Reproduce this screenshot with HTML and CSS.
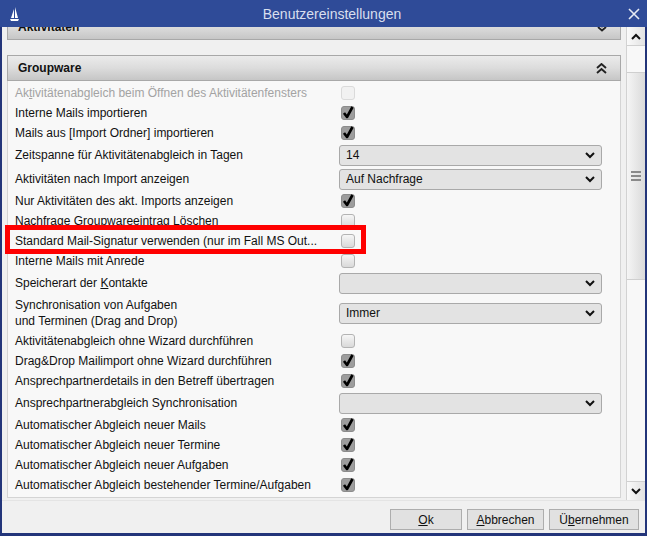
FILE: index.html
```html
<!DOCTYPE html>
<html lang="de">
<head>
    <meta charset="UTF-8">
    <title>Benutzereinstellungen</title>
    <link rel="stylesheet" href="styles.css">
</head>
<body>
<div class="window">
    <div class="titlebar">
        <svg class="app-icon" width="9" height="15" viewBox="0 0 9 15">
            <path d="M5 0 L8 11 L5 11 Z M4 2 L1 11 L4 11 Z" fill="#fff"/>
            <path d="M0 12 L9 12 L8 14 L1 14 Z" fill="#fff"/>
        </svg>
        <span class="title">Benutzereinstellungen</span>
        <svg class="close" width="12" height="12" viewBox="0 0 12 12">
            <path d="M1 1 L11 11 M11 1 L1 11" stroke="#e6eaf4" stroke-width="1.6"/>
        </svg>
    </div>

    <div class="client">
        <div class="main">
            <div class="view">
                <div class="panel-head first">
                    <span>Aktivitäten</span>
                    <svg width="10" height="10" viewBox="0 0 10 10"><path d="M1 1 L5 4.5 L9 1 M1 5 L5 8.5 L9 5" stroke="#222" stroke-width="1.8" fill="none"/></svg>
                </div>

                <div class="panel-head">
                    <span>Groupware</span>
                    <svg width="11" height="11" viewBox="0 0 11 11"><path d="M1 5 L5.5 1 L10 5 M1 10 L5.5 6 L10 10" stroke="#222" stroke-width="1.9" fill="none"/></svg>
                </div>
                <div class="panel-body">
                    <div class="row">
                        <div class="lbl disabled">Ak<u>t</u>ivitätenabgleich beim Öffnen des Aktivitätenfensters</div>
                        <div class="ctl"><span class="cb dis"></span></div>
                    </div>
                    <div class="row">
                        <div class="lbl">Interne Mails importieren</div>
                        <div class="ctl"><span class="cb on"><svg viewBox="0 0 14 14"><path d="M3 7.5 L6 11.5 L11.5 1.5"/></svg></span></div>
                    </div>
                    <div class="row">
                        <div class="lbl">Mails aus [Import Ordner] importieren</div>
                        <div class="ctl"><span class="cb on"><svg viewBox="0 0 14 14"><path d="M3 7.5 L6 11.5 L11.5 1.5"/></svg></span></div>
                    </div>
                    <div class="row sel">
                        <div class="lbl">Zeitspanne für Aktivitätenabgleich in Tagen</div>
                        <div class="ctl"><div class="combo"><span>14</span><svg viewBox="0 0 10 7"><path d="M1 1 L5 5 L9 1"/></svg></div></div>
                    </div>
                    <div class="row sel">
                        <div class="lbl">Aktivitäten nach Import anzeigen</div>
                        <div class="ctl"><div class="combo"><span>Auf Nachfrage</span><svg viewBox="0 0 10 7"><path d="M1 1 L5 5 L9 1"/></svg></div></div>
                    </div>
                    <div class="row">
                        <div class="lbl">Nur Aktivitäten des akt. Imports anzeigen</div>
                        <div class="ctl"><span class="cb on"><svg viewBox="0 0 14 14"><path d="M3 7.5 L6 11.5 L11.5 1.5"/></svg></span></div>
                    </div>
                    <div class="row">
                        <div class="lbl">Nachfrage Groupwareeintrag Löschen</div>
                        <div class="ctl"><span class="cb"></span></div>
                    </div>
                    <div class="row">
                        <div class="lbl">Standard Mail-Signatur verwenden (nur im Fall MS Out...</div>
                        <div class="ctl"><span class="cb"></span></div>
                    </div>
                    <div class="row">
                        <div class="lbl">Interne Mails mit Anrede</div>
                        <div class="ctl"><span class="cb"></span></div>
                    </div>
                    <div class="row sel">
                        <div class="lbl">Speicherart der <u>K</u>ontakte</div>
                        <div class="ctl"><div class="combo"><span></span><svg viewBox="0 0 10 7"><path d="M1 1 L5 5 L9 1"/></svg></div></div>
                    </div>
                    <div class="row tall">
                        <div class="lbl">Synchronisation von Aufgaben<br>und Terminen (Drag and Drop)</div>
                        <div class="ctl"><div class="combo"><span>Immer</span><svg viewBox="0 0 10 7"><path d="M1 1 L5 5 L9 1"/></svg></div></div>
                    </div>
                    <div class="row">
                        <div class="lbl">Aktivitätenabgleich ohne Wizard durchführen</div>
                        <div class="ctl"><span class="cb"></span></div>
                    </div>
                    <div class="row">
                        <div class="lbl">Drag&amp;Drop Mailimport ohne Wizard durchführen</div>
                        <div class="ctl"><span class="cb on"><svg viewBox="0 0 14 14"><path d="M3 7.5 L6 11.5 L11.5 1.5"/></svg></span></div>
                    </div>
                    <div class="row">
                        <div class="lbl">Ansprechpartnerdetails in den Betreff übertragen</div>
                        <div class="ctl"><span class="cb on"><svg viewBox="0 0 14 14"><path d="M3 7.5 L6 11.5 L11.5 1.5"/></svg></span></div>
                    </div>
                    <div class="row sel">
                        <div class="lbl">Ansprechpartnerabgleich Synchronisation</div>
                        <div class="ctl"><div class="combo"><span></span><svg viewBox="0 0 10 7"><path d="M1 1 L5 5 L9 1"/></svg></div></div>
                    </div>
                    <div class="row">
                        <div class="lbl">Automatischer Abgleich neuer Mails</div>
                        <div class="ctl"><span class="cb on"><svg viewBox="0 0 14 14"><path d="M3 7.5 L6 11.5 L11.5 1.5"/></svg></span></div>
                    </div>
                    <div class="row">
                        <div class="lbl">Automatischer Abgleich neuer Termine</div>
                        <div class="ctl"><span class="cb on"><svg viewBox="0 0 14 14"><path d="M3 7.5 L6 11.5 L11.5 1.5"/></svg></span></div>
                    </div>
                    <div class="row">
                        <div class="lbl">Automatischer Abgleich neuer Aufgaben</div>
                        <div class="ctl"><span class="cb on"><svg viewBox="0 0 14 14"><path d="M3 7.5 L6 11.5 L11.5 1.5"/></svg></span></div>
                    </div>
                    <div class="row">
                        <div class="lbl">Automatischer Abgleich bestehender Termine/Aufgaben</div>
                        <div class="ctl"><span class="cb on"><svg viewBox="0 0 14 14"><path d="M3 7.5 L6 11.5 L11.5 1.5"/></svg></span></div>
                    </div>
                </div>
            </div>

            <div class="vscroll">
                <div class="sb-btn"><svg viewBox="0 0 10 7"><path d="M1 6 L5 2 L9 6"/></svg></div>
                <div class="sb-space"></div>
                <div class="sb-thumb"><span></span><span></span><span></span></div>
                <div class="sb-rest"></div>
                <div class="sb-btn down"><svg viewBox="0 0 10 7"><path d="M1 1 L5 5 L9 1"/></svg></div>
            </div>
        </div>

        <div class="footer">
            <button class="btn ok"><u>O</u>k</button>
            <button class="btn cancel"><u>A</u>bbrechen</button>
            <button class="btn apply">Ü<u>b</u>ernehmen</button>
        </div>
    </div>

    <!-- annotation marker over the signature row -->
    <div class="highlight"></div>
</div>
</body>
</html>
```

FILE: styles.css
```css
* {
    box-sizing: border-box;
}

body {
    margin: 0;
    font-family: "Liberation Sans", Arial, sans-serif;
    font-size: 12px;
    color: #111;
    background: #fff;
}

.window {
    position: relative;
    width: 647px;
    height: 536px;
    background: #23357a;
    display: flex;
    flex-direction: column;
    overflow: hidden;
}

/* title bar */
.titlebar {
    height: 27px;
    flex-shrink: 0;
    background: #2f4b98;
    display: flex;
    align-items: center;
}

.app-icon {
    margin-left: 10px;
    margin-top: 1px;
}

.title {
    flex-grow: 1;
    text-align: center;
    padding-left: 17px;
    font-size: 14px;
    color: #d9dfee;
}

.close {
    margin-right: 7px;
}

/* client area */
.client {
    flex-grow: 1;
    margin: 0 2px 3px 2px;
    background: #f0f0f0;
    display: flex;
    flex-direction: column;
}

.main {
    height: 473px;
    display: flex;
}

.view {
    flex-grow: 1;
    overflow: hidden;
    padding: 0 5px;
}

.panel-head {
    height: 26px;
    margin-top: 15px;
    background: linear-gradient(#ebebeb, #dcdcdc 50%, #c6c6c6);
    border: 1px solid #a8a8a8;
    display: flex;
    align-items: center;
    justify-content: space-between;
    padding: 0 13px 0 10px;
    font-weight: bold;
}

.panel-head.first {
    margin-top: -13px;
}

.panel-body {
    background: #f8f8f8;
    border: 1px solid #d4d4d4;
    border-top: none;
    padding: 2px 0 2px 7px;
}

.row {
    height: 20px;
    display: flex;
    align-items: center;
}

.row.sel {
    height: 24px;
}

.row.tall {
    height: 36px;
}

.lbl {
    width: 324px;
    line-height: 16px;
    white-space: nowrap;
}

.lbl.disabled {
    color: #a3a3a3;
}

.ctl {
    width: 263px;
    display: flex;
    align-items: center;
}

/* checkboxes */
.cb {
    width: 14px;
    height: 14px;
    margin-left: 2px;
    border: 1px solid #b3b3b3;
    border-radius: 3px;
    background: linear-gradient(#f6f6f6, #d9d9d9);
    position: relative;
}

.cb.dis {
    border-color: #dadada;
    background: #f1f1f1;
}

.cb.on {
    background: #9d9d9d;
    border-color: #8c8c8c;
}

.cb svg {
    position: absolute;
    left: -1px;
    top: -2px;
    width: 14px;
    height: 15px;
}

.cb svg path {
    fill: none;
    stroke: #000;
    stroke-width: 2.6;
    stroke-linejoin: round;
}

/* combo boxes */
.combo {
    width: 263px;
    height: 21px;
    border: 1px solid #a9a9a9;
    border-radius: 3px;
    background: #e3e3e3;
    display: flex;
    align-items: center;
    justify-content: space-between;
    padding: 0 6px 0 6px;
}

.combo svg,
.sb-btn svg {
    width: 10px;
    height: 7px;
}

.combo svg path,
.sb-btn svg path {
    fill: none;
    stroke: #111;
    stroke-width: 2;
}

/* scrollbar */
.vscroll {
    width: 19px;
    border-left: 1px solid #d2d2d2;
    background: #f8f8f8;
    display: flex;
    flex-direction: column;
}

.sb-btn {
    height: 19px;
    background: linear-gradient(90deg, #fafafa, #e2e2e2);
    border-bottom: 1px solid #d0d0d0;
    display: flex;
    align-items: center;
    justify-content: center;
}

.sb-btn.down {
    height: 19px;
    border-bottom: none;
    border-top: 1px solid #d0d0d0;
}

.sb-space {
    height: 26px;
}

.sb-thumb {
    height: 208px;
    background: linear-gradient(90deg, #f5f5f5, #dadada);
    border-top: 1px solid #cfcfcf;
    border-bottom: 1px solid #cfcfcf;
    display: flex;
    flex-direction: column;
    align-items: center;
    justify-content: center;
    gap: 2px;
}

.sb-thumb span {
    width: 10px;
    height: 2px;
    background: #8a8a8a;
}

.sb-rest {
    flex-grow: 1;
}

/* footer buttons */
.footer {
    flex-grow: 1;
    display: flex;
    justify-content: flex-end;
    align-items: flex-start;
    gap: 5px;
    padding: 8px 6px 0 0;
    border-top: 1px solid #e4e4e4;
}

.btn {
    height: 21px;
    padding: 0;
    background: #e1e1e1;
    border: 1px solid #adadad;
    font-family: "Liberation Sans", Arial, sans-serif;
    font-size: 12px;
    color: #111;
}

.btn.ok {
    width: 72px;
}

.btn.cancel {
    width: 77px;
}

.btn.apply {
    width: 90px;
}

.highlight {
    position: absolute;
    left: 5px;
    top: 225px;
    width: 361px;
    height: 29px;
    border: 5px solid #f00;
}
```
